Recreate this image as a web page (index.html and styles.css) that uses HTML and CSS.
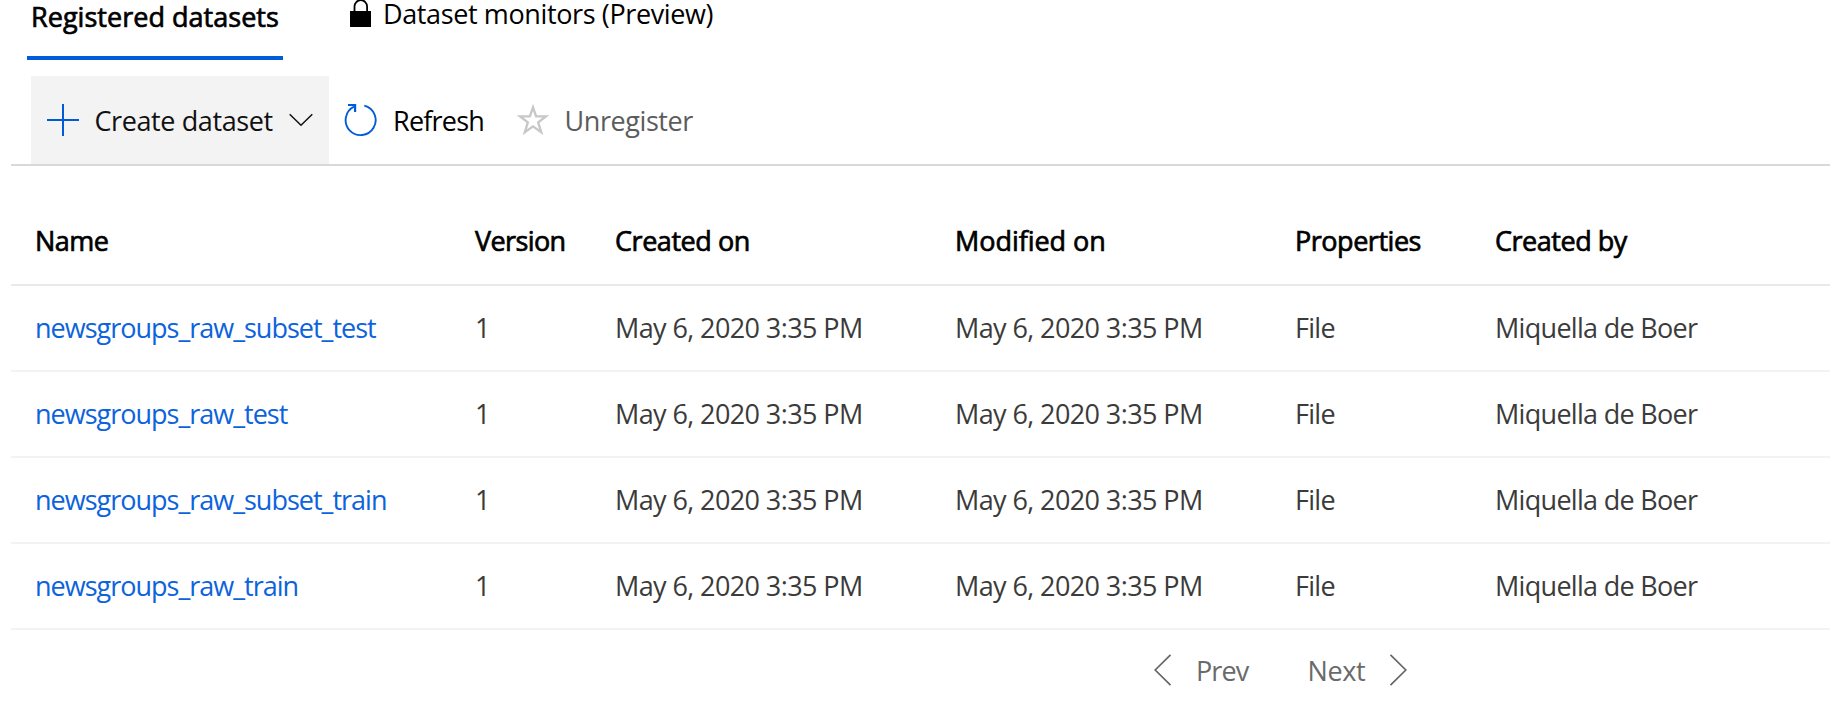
FILE: index.html
```
<!DOCTYPE html>
<html lang="en">
<head>
<meta charset="utf-8">
<title>Registered datasets</title>
<link rel="stylesheet" href="styles.css">
</head>
<body>
<nav class="tabs">
  <a class="tab tab-active">Registered datasets</a>
  <a class="tab tab-monitors">
    <svg class="lock" width="22" height="28" viewBox="0 0 22 28"><path d="M4.500 12V6.500a6.300 6.300 0 0 1 12.600 0V12" fill="none" stroke="#000" stroke-width="1.800"/><path d="M0 11h21v16H0z"/></svg>
    <span>Dataset monitors (Preview)</span>
  </a>
</nav>
<div class="toolbar">
  <button class="create">
    <svg width="32" height="32" viewBox="0 0 32 32"><path d="M16 0v32M0 16h32" stroke="#0059d6" stroke-width="2"/></svg>
    <span class="create-label">Create dataset</span>
    <svg class="chevron" width="24" height="14" viewBox="0 0 24 14"><path d="M.7 1.200 12 12.300 23.300 1.200" fill="none" stroke="#111" stroke-width="1.500"/></svg>
  </button>
  <button class="refresh">
    <svg width="34" height="34" viewBox="0 0 34 34"><path d="M20.300 2.600A15 15 0 1 1 10 3.700" fill="none" stroke="#015cda" stroke-width="1.900"/><path d="M4 2h7.100v7" fill="none" stroke="#015cda" stroke-width="2.200"/></svg>
    <span class="refresh-label">Refresh</span>
  </button>
  <button class="unregister">
    <svg width="32" height="32" viewBox="0 0 32 32"><path d="M16 3.400l3.100 9h9.700l-7.600 6 3 9.900L16 22.400l-8.200 5.900 3-9.900-7.600-6h9.700z" fill="none" stroke="#c8c8c8" stroke-width="2.400"/></svg>
    <span class="unregister-label">Unregister</span>
  </button>
</div>
<main class="grid">
  <div class="row head">
    <span class="h-name">Name</span><span class="h-version">Version</span><span class="h-created">Created on</span><span class="h-modified">Modified on</span><span class="h-tight">Properties</span><span class="h-tight">Created by</span>
  </div>
  <div class="row"><a class="link">newsgroups_raw_subset_test</a><span>1</span><span class="date">May 6, 2020 3:35 PM</span><span class="date">May 6, 2020 3:35 PM</span><span class="text">File</span><span class="text">Miquella de Boer</span></div>
  <div class="row"><a class="link">newsgroups_raw_test</a><span>1</span><span class="date">May 6, 2020 3:35 PM</span><span class="date">May 6, 2020 3:35 PM</span><span class="text">File</span><span class="text">Miquella de Boer</span></div>
  <div class="row"><a class="link">newsgroups_raw_subset_train</a><span>1</span><span class="date">May 6, 2020 3:35 PM</span><span class="date">May 6, 2020 3:35 PM</span><span class="text">File</span><span class="text">Miquella de Boer</span></div>
  <div class="row"><a class="link">newsgroups_raw_train</a><span>1</span><span class="date">May 6, 2020 3:35 PM</span><span class="date">May 6, 2020 3:35 PM</span><span class="text">File</span><span class="text">Miquella de Boer</span></div>
</main>
<footer class="pager">
  <button class="prev">
    <svg width="18" height="32" viewBox="0 0 18 32"><path d="M16.500.8 1.200 16l15.300 15.200" fill="none" stroke="#666" stroke-width="1.700"/></svg>
    <span class="prev-label">Prev</span>
  </button>
  <button class="next">
    <span class="next-label">Next</span>
    <svg width="18" height="32" viewBox="0 0 18 32"><path d="M1.500.8 16.800 16 1.500 31.200" fill="none" stroke="#666" stroke-width="1.700"/></svg>
  </button>
</footer>
</body>
</html>
```
FILE: styles.css
```
* { box-sizing: border-box; }
body {
  margin: 0;
  height: 719px;
  overflow: hidden;
  background: #fff;
  color: #000;
  font: 400 27px/36px "Open Sans", "Noto Sans", sans-serif;
  white-space: nowrap;
}
svg { display: block; flex: none; }
button {
  display: flex;
  align-items: flex-start;
  margin: 0;
  padding: 0;
  border: 0;
  background: none;
  color: inherit;
  font: inherit;
}
.tabs { display: flex; height: 60px; padding-left: 27px; }
.tab-active {
  width: 256px;
  height: 60px;
  padding-left: 4px;
  border-bottom: 4px solid #015cda;
  line-height: 34px;
  font-weight: 500;
  letter-spacing: 0.03px;
  -webkit-text-stroke: 0.7px #000;
}
.tab-monitors {
  display: flex;
  gap: 11px;
  margin-left: 67px;
  line-height: 28px;
  letter-spacing: -0.38px;
}
.toolbar {
  display: flex;
  height: 106px;
  margin-left: 11px;
  padding: 16px 0 0 20px;
  border-bottom: 2px solid #d9d9d9;
}
.create {
  width: 298px;
  height: 88px;
  padding: 28px 0 0 16px;
  background: #f3f3f3;
  color: #111;
}
.create-label { width: 178px; margin-left: 15.5px; line-height: 33px; letter-spacing: -0.4px; }
.chevron { margin: 9px 0 0 16.500px; }
.refresh { padding: 27px 0 0 15px; }
.refresh-label { margin: 1px 0 0 15px; line-height: 33px; letter-spacing: -0.78px; }
.unregister { margin-left: 32.500px; padding-top: 28px; color: #5c5c5c; }
.unregister-label { margin-left: 16px; line-height: 33px; letter-spacing: -0.43px; }
.grid { margin-left: 11px; }
.row {
  display: grid;
  grid-template-columns: 440px 140px 340px 340px 200px 1fr;
  align-items: start;
  height: 86px;
  padding: 23.500px 0 0 24px;
  border-bottom: 2px solid #f3f3f3;
  color: #3b3b3b;
}
.head {
  height: 120px;
  padding-top: 57px;
  border-color: #e9e9e9;
  color: #000;
  font-weight: 500;
  -webkit-text-stroke: 0.7px #000;
}
.h-name { letter-spacing: -0.55px; }
.h-version { letter-spacing: -0.6px; }
.h-created { letter-spacing: -0.45px; }
.h-modified { letter-spacing: -0.05px; }
.h-tight { letter-spacing: -0.47px; }
.link { color: #0c63dc; letter-spacing: -1px; }
.date { letter-spacing: -0.6px; }
.text { letter-spacing: -0.7px; }
.pager { display: flex; padding: 24px 0 0 1154px; color: #6a6a6a; }
.prev-label { margin-left: 24px; line-height: 33px; letter-spacing: -0.9px; }
.next { margin-left: 59px; }
.next-label { width: 58px; margin-right: 24px; line-height: 33px; letter-spacing: -0.4px; }
```
